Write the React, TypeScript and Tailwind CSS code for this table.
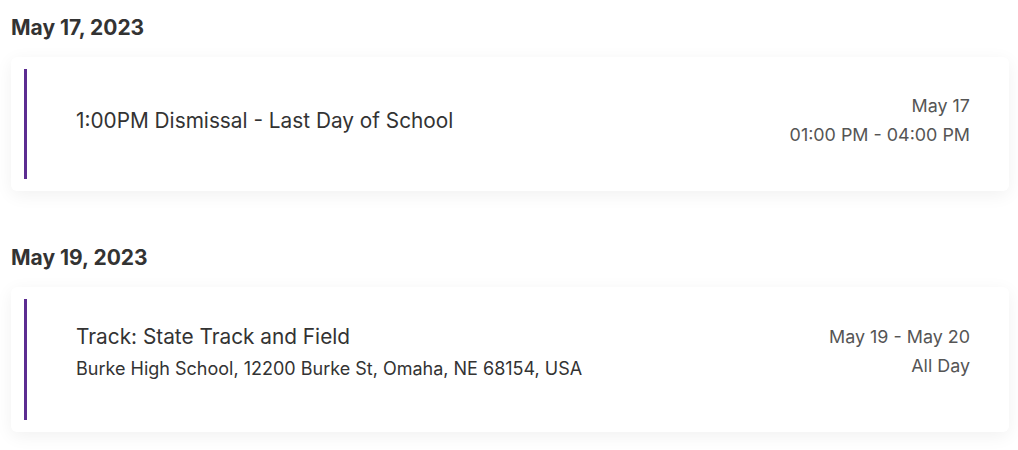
const DAYS = [
  {
    heading: "May 17, 2023",
    events: [
      {
        title: "1:00PM Dismissal - Last Day of School",
        location: "",
        when: ["May 17", "01:00 PM - 04:00 PM"],
      },
    ],
  },
  {
    heading: "May 19, 2023",
    events: [
      {
        title: "Track: State Track and Field",
        location: "Burke High School, 12200 Burke St, Omaha, NE 68154, USA",
        when: ["May 19 - May 20", "All Day"],
      },
    ],
  },
];

type Ev = (typeof DAYS)[number]["events"][number];

function EventCard({ ev }: { ev: Ev }) {
  return (
    <div className="rounded-md bg-white px-[13px] py-3 shadow-[0_4px_18px_rgba(0,0,0,0.06)]">
      <div
        className={
          "flex justify-between border-l-[3px] border-[#5c2d91] pl-[49px] pr-[26px] " +
          (ev.location ? "items-start pt-[24px] pb-[37px]" : "items-center pt-[23px] pb-[30px]")
        }
      >
        <div className="flex flex-col">
          <span className="text-[20.8px] leading-[28px] text-[#333]">{ev.title}</span>
          {ev.location && (
            <span className="mt-[4px] text-[18px] leading-[28px] text-[#333]">{ev.location}</span>
          )}
        </div>
        <div className="flex flex-col items-end text-[17.9px] leading-[28.5px] text-[#555]">
          {ev.when.map((w) => (
            <span key={w}>{w}</span>
          ))}
        </div>
      </div>
    </div>
  );
}

export default function App() {
  return (
    <div
      className="min-h-[450px] w-[1018px] bg-white pl-[11px] pr-[9px] pt-[15px]"
      style={{ fontFamily: "Inter, 'Noto Sans', sans-serif" }}
    >
      {DAYS.map((day, i) => (
        <section key={day.heading} className={i > 0 ? "mt-[54px]" : ""}>
          <h2 className="text-[21px] font-bold leading-[26px] text-[#333]">
            {day.heading}
          </h2>
          <div className="mt-[16px] flex flex-col gap-4">
            {day.events.map((ev) => (
              <EventCard key={ev.title} ev={ev} />
            ))}
          </div>
        </section>
      ))}
    </div>
  );
}
